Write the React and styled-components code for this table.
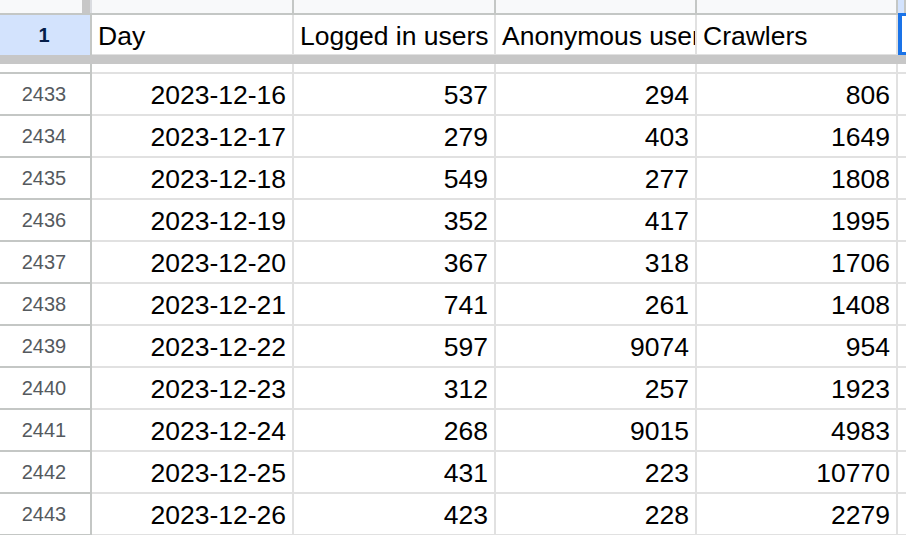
import React from 'react';
import styled, { createGlobalStyle } from 'styled-components';

const GlobalStyle = createGlobalStyle`
  html, body {
    margin: 0;
    padding: 0;
    background: #fff;
    overflow: hidden;
  }
`;

const headers = ['Day', 'Logged in users', 'Anonymous users', 'Crawlers'];

const rows = [
  [2433, '2023-12-16', 537, 294, 806],
  [2434, '2023-12-17', 279, 403, 1649],
  [2435, '2023-12-18', 549, 277, 1808],
  [2436, '2023-12-19', 352, 417, 1995],
  [2437, '2023-12-20', 367, 318, 1706],
  [2438, '2023-12-21', 741, 261, 1408],
  [2439, '2023-12-22', 597, 9074, 954],
  [2440, '2023-12-23', 312, 257, 1923],
  [2441, '2023-12-24', 268, 9015, 4983],
  [2442, '2023-12-25', 431, 223, 10770],
  [2443, '2023-12-26', 423, 228, 2279],
];

function App() {
  return (
    <>
      <GlobalStyle />
      <Sheet>
        <Row $height={15}>
          <Corner />
          {headers.map((h) => (
            <ColHeader key={h} />
          ))}
          <ColHeader $selected />
        </Row>

        <Row $height={40}>
          <RowHeader $selected>1</RowHeader>
          {headers.map((h) => (
            <Cell key={h} $header>
              <CellText>{h}</CellText>
            </Cell>
          ))}
          <SelectedCell />
        </Row>

        <FreezeBar />

        <Row $height={10}>
          <RowHeader />
          {headers.map((h) => (
            <Cell key={h} />
          ))}
          <Cell />
        </Row>

        {rows.map(([num, day, logged, anon, crawlers]) => (
          <Row key={num} $height={42}>
            <RowHeader>{num}</RowHeader>
            <Cell $align="right">
              <CellText>{day}</CellText>
            </Cell>
            <Cell $align="right">
              <CellText>{logged}</CellText>
            </Cell>
            <Cell $align="right">
              <CellText>{anon}</CellText>
            </Cell>
            <Cell $align="right">
              <CellText>{crawlers}</CellText>
            </Cell>
            <Cell />
          </Row>
        ))}
      </Sheet>
    </>
  );
}

export default App;

const Sheet = styled.div`
  width: 906px;
  height: 535px;
  overflow: hidden;
  font-family: 'Liberation Sans', Arial, sans-serif;
  color: #000;
`;

const Row = styled.div`
  display: grid;
  grid-template-columns: 92px 202px 202px 201px 201px 1fr;
  height: ${(p) => p.$height}px;
`;

const Corner = styled.div`
  box-sizing: border-box;
  background: linear-gradient(to right, #f8f9fa 82px, #c7c7c7 82px, #c7c7c7 90px, #dadce0 90px);
  border-bottom: 2px solid #c4c7c5;
`;

const ColHeader = styled.div`
  box-sizing: border-box;
  background: ${(p) => (p.$selected ? '#d3e3fd' : '#f8f9fa')};
  border-right: 2px solid #c4c7c5;
  border-bottom: 2px solid #c4c7c5;
`;

const RowHeader = styled.div`
  box-sizing: border-box;
  display: flex;
  align-items: center;
  justify-content: center;
  background: ${(p) => (p.$selected ? '#d3e3fd' : '#fff')};
  border-right: 2px solid #c4c7c5;
  border-bottom: ${(p) => (p.$selected ? 'none' : '2px solid #c4c7c5')};
  font-size: 20px;
  font-weight: ${(p) => (p.$selected ? 700 : 400)};
  color: ${(p) => (p.$selected ? '#041e49' : '#555a5e')};
  padding-right: 2px;
`;

const Cell = styled.div`
  box-sizing: border-box;
  display: flex;
  align-items: center;
  justify-content: ${(p) => (p.$align === 'right' ? 'flex-end' : 'flex-start')};
  overflow: hidden;
  white-space: nowrap;
  border-right: 2px solid #e1e1e1;
  border-bottom: ${(p) => (p.$header ? '1px solid #e1e1e1' : '2px solid #e1e1e1')};
  padding: 3px 6px 0 6px;
  font-size: 26.5px;
`;

const CellText = styled.span`
  display: block;
  line-height: 1;
`;

const SelectedCell = styled.div`
  box-sizing: border-box;
  margin-top: -2px;
  border: 3px solid #1a73e8;
  border-left-width: 4px;
  border-right: none;
  background: #fff;
`;

const FreezeBar = styled.div`
  height: 9px;
  background: #c7c7c7;
`;
